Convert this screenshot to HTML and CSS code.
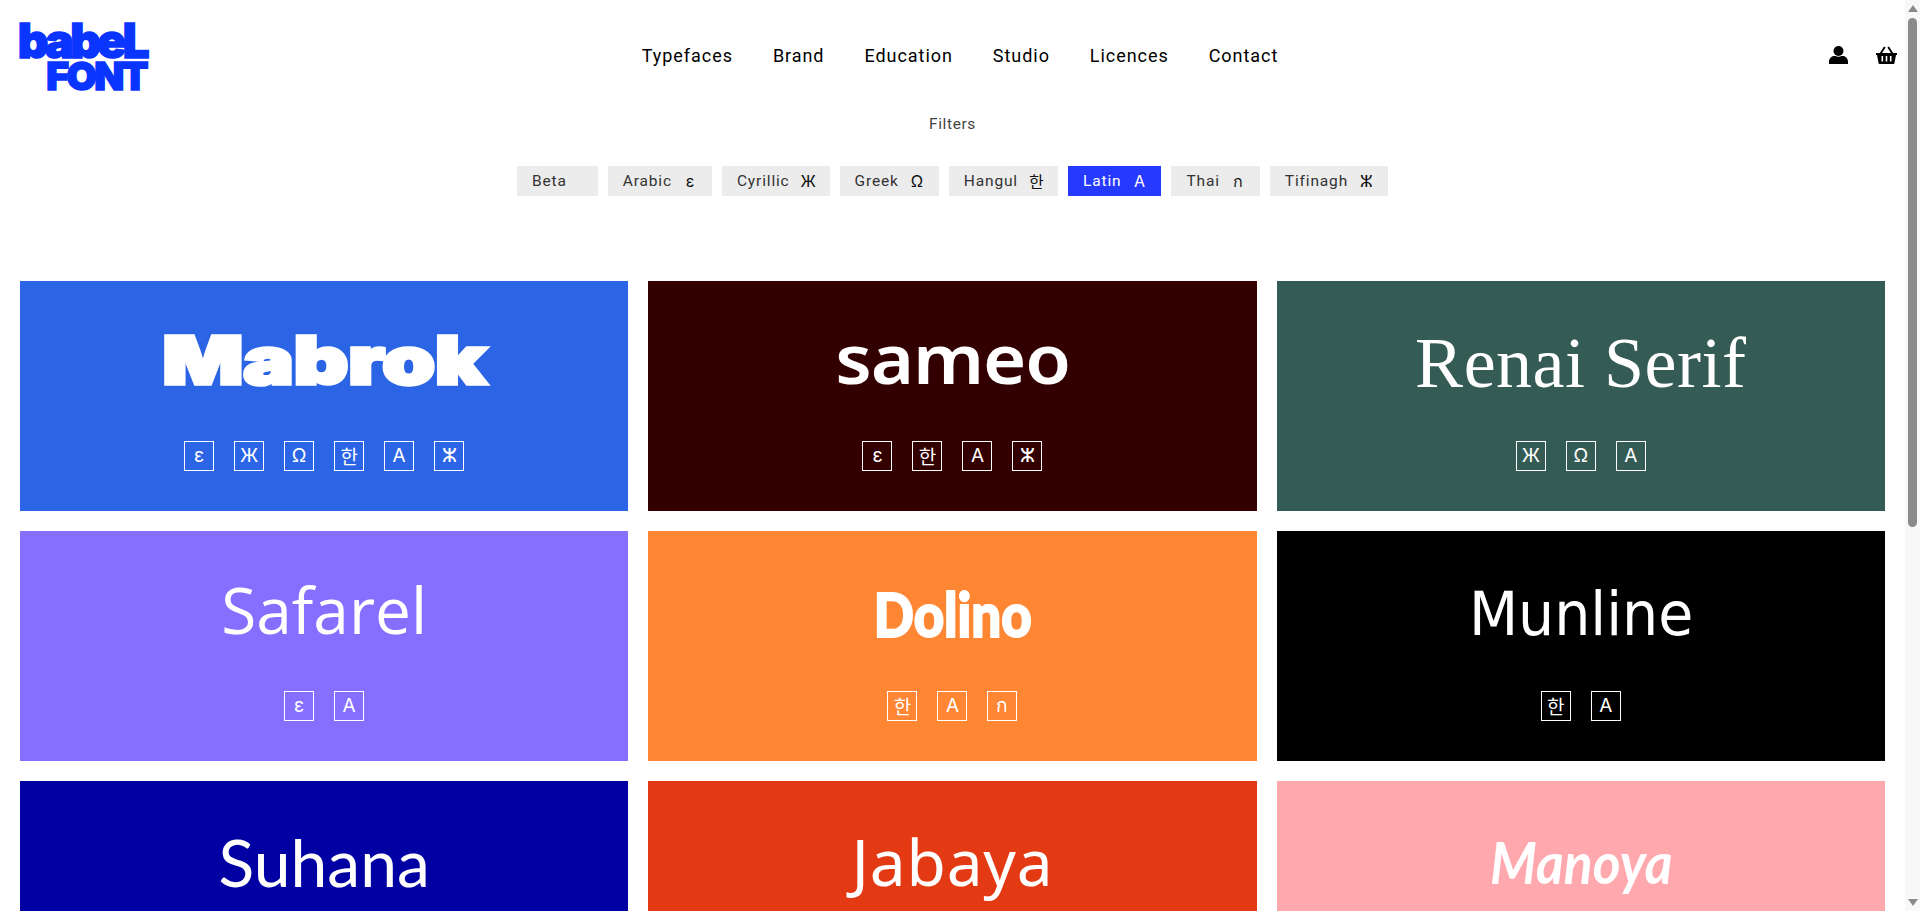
FILE: index.html
```html
<!DOCTYPE html>
<html lang="en">
<head>
  <meta charset="UTF-8" />
  <meta name="viewport" content="width=device-width, initial-scale=1.0" />
  <title>Babel Font</title>
  <link rel="stylesheet" href="styles.css">
</head>
<body>
  <header class="top">
    <a class="logo" href="#"><span class="logo-a">babeL</span><span class="logo-b">FONT</span></a>
    <nav class="menu">
      <a href="#">Typefaces</a>
      <a href="#">Brand</a>
      <a href="#">Education</a>
      <a href="#">Studio</a>
      <a href="#">Licences</a>
      <a href="#">Contact</a>
    </nav>
    <div class="tools">
      <svg class="ico-user" viewBox="0 0 19 18"><circle cx="9.5" cy="5" r="5"/><path d="M0 18v-2.500C0 12.500 2.500 10 5 10h1.500c1.800 1 4.200 1 6 0H14c2.500 0 5 2.500 5 5.500V18z"/></svg>
      <svg class="ico-basket" viewBox="0 0 21 18"><path d="M0 7h3.800L8 .6l1.600 1L6.100 7h8.800L11.400 1.600l1.600-1L17.200 7H21v2h-1l-1.600 8.200c-.1.500-.5.800-1 .8H3.600c-.5 0-.9-.3-1-.8L1 9H0zM5.500 10v5.500h1.600V10zm4.200 0v5.500h1.600V10zm4.200 0v5.500h1.600V10z" fill-rule="evenodd"/></svg>
    </div>
  </header>

  <section class="filters">
    <p class="filters-title">Filters</p>
    <div class="chips">
      <button class="chip">Beta<span class="glyph"></span></button>
      <button class="chip">Arabic<span class="glyph">ε</span></button>
      <button class="chip">Cyrillic<span class="glyph">Ж</span></button>
      <button class="chip">Greek<span class="glyph">Ω</span></button>
      <button class="chip">Hangul<span class="glyph">한</span></button>
      <button class="chip active">Latin<span class="glyph">A</span></button>
      <button class="chip">Thai<span class="glyph">ก</span></button>
      <button class="chip">Tifinagh<span class="glyph">ⵣ</span></button>
    </div>
  </section>

  <main class="grid">
    <a class="card mabrok" href="#">
      <h2>Mabrok</h2>
      <div class="scripts"><span>ε</span><span>Ж</span><span>Ω</span><span>한</span><span>A</span><span>ⵣ</span></div>
    </a>
    <a class="card sameo" href="#">
      <h2>sameo</h2>
      <div class="scripts"><span>ε</span><span>한</span><span>A</span><span>ⵣ</span></div>
    </a>
    <a class="card renai" href="#">
      <h2>Renai Serif</h2>
      <div class="scripts"><span>Ж</span><span>Ω</span><span>A</span></div>
    </a>
    <a class="card safarel" href="#">
      <h2>Safarel</h2>
      <div class="scripts"><span>ε</span><span>A</span></div>
    </a>
    <a class="card dolino" href="#">
      <h2>Dolino</h2>
      <div class="scripts"><span>한</span><span>A</span><span>ก</span></div>
    </a>
    <a class="card munline" href="#">
      <h2>Munline</h2>
      <div class="scripts"><span>한</span><span>A</span></div>
    </a>
    <a class="card suhana" href="#">
      <h2>Suhana</h2>
      <div class="scripts"><span>ε</span><span>A</span></div>
    </a>
    <a class="card jabaya" href="#">
      <h2>Jabaya</h2>
      <div class="scripts"><span>ε</span><span>A</span></div>
    </a>
    <a class="card manoya" href="#">
      <h2>Manoya</h2>
      <div class="scripts"><span>A</span></div>
    </a>
  </main>

  <div class="scrollbar">
    <i class="arrow-up"></i>
    <i class="thumb"></i>
    <i class="arrow-down"></i>
  </div>
</body>
</html>
```

FILE: styles.css
```css
* { box-sizing: border-box; }
body {
  margin: 0;
  padding-right: 15px;
  font-family: Roboto, sans-serif;
  color: #000;
  background: #fff;
}
a { color: inherit; text-decoration: none; }

/* scrollbar drawn by hand, the headless browser hides the real one */
.scrollbar {
  position: fixed;
  top: 0;
  right: 0;
  bottom: 0;
  display: flex;
  flex-direction: column;
  align-items: center;
  width: 15px;
  padding: 5px 0;
  background: #f8f8f8;
}
.arrow-up, .arrow-down {
  width: 0;
  height: 0;
  border-left: 5px solid transparent;
  border-right: 5px solid transparent;
}
.arrow-up { border-bottom: 7px solid #8a8a8a; }
.arrow-down { margin-top: auto; border-top: 7px solid #8a8a8a; }
.thumb {
  width: 9px;
  height: 509px;
  margin-top: 6px;
  border-radius: 5px;
  background: #8a8a8a;
}

.top {
  display: grid;
  grid-template-columns: 1fr auto 1fr;
  align-items: center;
  height: 110px;
  padding: 0 8px 0 20px;
}
.logo {
  display: flex;
  flex-direction: column;
  align-items: flex-end;
  width: 130px;
  height: 70px;
  margin-top: 4px;
  padding-right: 4px;
  color: #0a35ff;
  font-family: Inter, sans-serif;
  font-weight: 900;
}
.logo-a {
  font-size: 47.500px;
  line-height: 37px;
  letter-spacing: -3.500px;
  -webkit-text-stroke: 1.500px #0a35ff;
}
.logo-b {
  font-size: 39px;
  line-height: 33px;
  letter-spacing: -2.500px;
  -webkit-text-stroke: 1.500px #0a35ff;
}

.menu {
  display: flex;
  gap: 40px;
  margin-left: 3px;
  font-size: 18px;
  letter-spacing: 0.950px;
}
.tools {
  display: flex;
  justify-content: flex-end;
  align-items: center;
  gap: 28px;
}
.ico-user { width: 19px; height: 18px; }
.ico-basket { width: 21px; height: 18px; }

.filters { height: 171px; text-align: center; }
.filters-title {
  margin: 0;
  padding-top: 4px;
  font-size: 15.500px;
  line-height: 20px;
  letter-spacing: 0.600px;
  color: #444;
}
.chips {
  display: flex;
  justify-content: center;
  gap: 10px;
  margin-top: 32px;
}
.chip {
  display: flex;
  align-items: center;
  height: 30px;
  padding: 0 15px;
  border: 0;
  background: #ececec;
  color: #333;
  font-family: inherit;
  font-size: 15.500px;
  letter-spacing: 0.850px;
}
.chip .glyph {
  width: 14px;
  margin-left: 11px;
  color: #111;
  font-family: Inter, "Noto Sans CJK KR", sans-serif;
  font-size: 16px;
  letter-spacing: 0;
  text-align: center;
}
.chip .glyph:empty { width: 5px; }
.chip.active { background: #2639ff; color: #fff; }
.chip.active .glyph { color: #fff; }

.grid {
  display: grid;
  grid-template-columns: repeat(3, 1fr);
  gap: 20px;
  padding: 0 20px 20px;
}
.card {
  display: flex;
  flex-direction: column;
  align-items: center;
  height: 230px;
  color: #fff;
}
.card h2 {
  display: flex;
  align-items: center;
  justify-content: center;
  height: 160px;
  margin: 0;
  font-weight: 400;
  white-space: nowrap;
}
.scripts { display: flex; gap: 20px; }
.scripts span {
  display: flex;
  align-items: center;
  justify-content: center;
  width: 30px;
  height: 30px;
  padding-bottom: 2px;
  border: 1px solid #fff;
  font-family: Inter, "Noto Sans CJK KR", sans-serif;
  font-size: 19px;
}

.mabrok { background: #2b65e6; }
.mabrok h2 {
  padding-bottom: 2px;
  font: 900 66px Inter, sans-serif;
  -webkit-text-stroke: 3.500px #fff;
  transform: scaleX(1.28);
}
.sameo { background: #320000; }
.sameo h2 {
  padding-bottom: 8px;
  font: 600 68px "Noto Sans", sans-serif;
  letter-spacing: -1px;
  transform: scaleX(1.09);
}
.renai { background: #355c54; }
.renai h2 {
  padding-top: 4px;
  font: 400 72px "Liberation Serif", serif;
  letter-spacing: 0.500px;
}
.safarel { background: #866fff; }
.safarel h2 {
  padding-bottom: 3px;
  font: 400 64px "Open Sans", sans-serif;
}
.dolino { background: #ff8633; }
.dolino h2 {
  padding-top: 6px;
  font: 900 60px Lato, sans-serif;
  -webkit-text-stroke: 2px #fff;
  transform: scaleX(0.88);
}
.munline { background: #000; }
.munline h2 {
  padding-top: 6px;
  font: 400 60px "DejaVu Sans", sans-serif;
  transform: scaleX(0.95);
}
.suhana { background: #0000a3; }
.suhana h2 { font: 400 66px Lato, sans-serif; }
.jabaya { background: #e43a14; }
.jabaya h2 {
  font: 400 64px "Noto Sans", sans-serif;
  letter-spacing: 0.800px;
}
.manoya { background: #ffa8ad; }
.manoya h2 {
  font: italic 700 58px Lato, sans-serif;
  transform: scaleX(0.92);
}
```
